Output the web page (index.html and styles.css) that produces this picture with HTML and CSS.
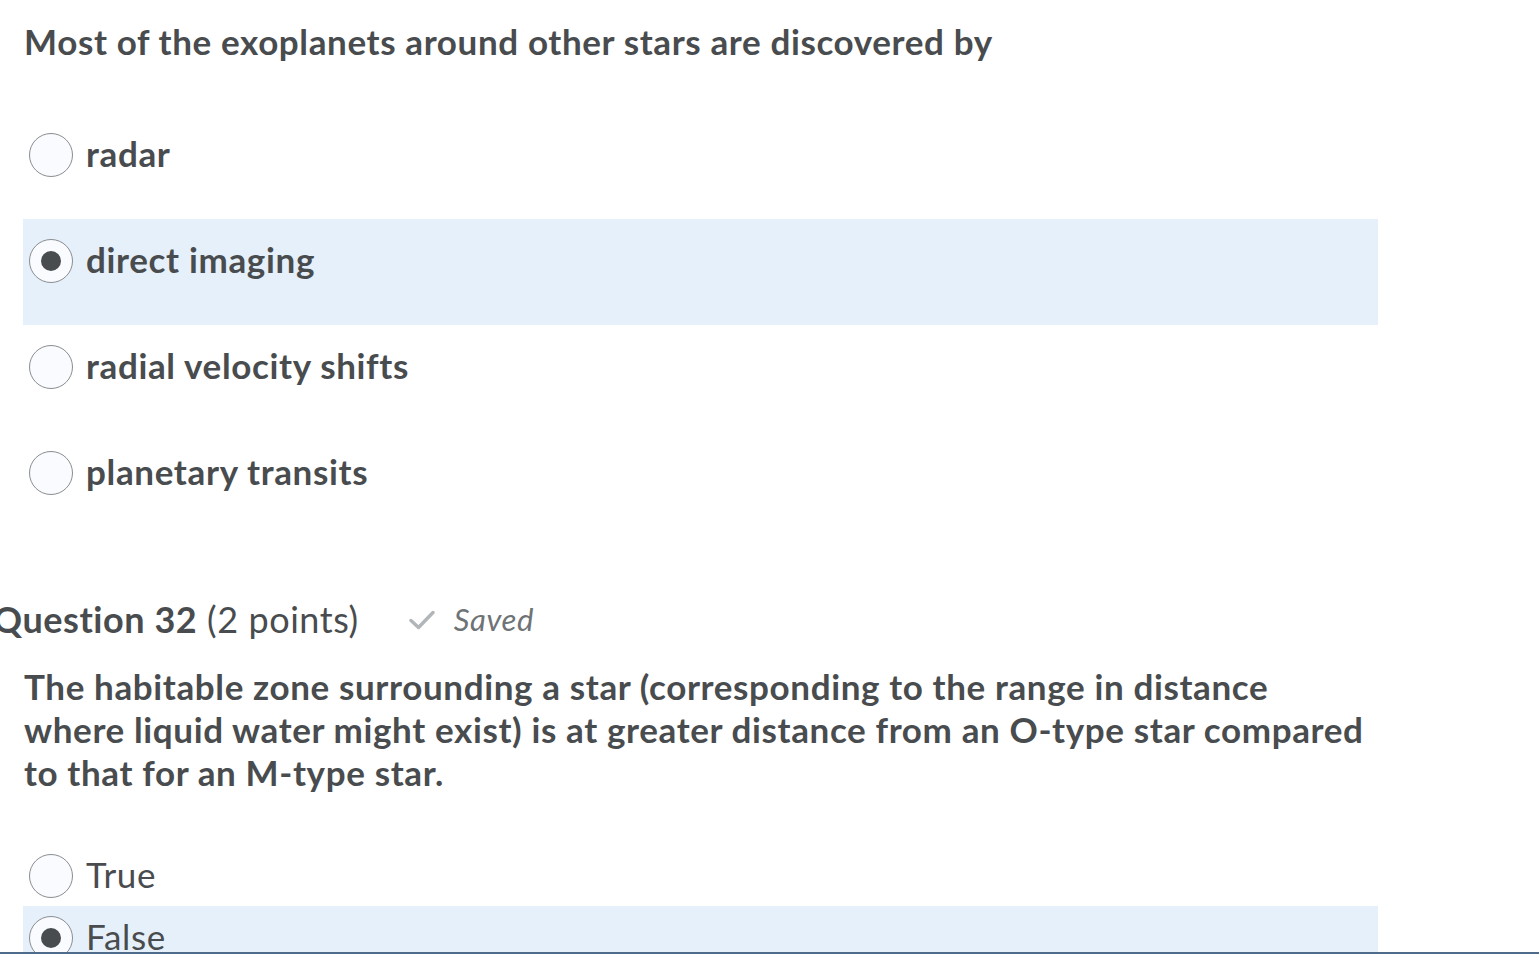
FILE: index.html
```html
<!DOCTYPE html>
<html>
<head>
<meta charset="utf-8">
<link rel="stylesheet" href="styles.css">
</head>
<body>
<div class="page">
  <div class="qtext">Most of the exoplanets around other stars are discovered by</div>
  <div class="options">
    <div class="opt"><span class="radio"></span><span class="label">radar</span></div>
    <div class="opt sel"><span class="radio on"></span><span class="label">direct imaging</span></div>
    <div class="opt"><span class="radio"></span><span class="label">radial velocity shifts</span></div>
    <div class="opt"><span class="radio"></span><span class="label">planetary transits</span></div>
  </div>

  <div class="qhead">
    <span class="qtitle"><span class="qnum">Question 32</span> <span class="pts">(2 points)</span></span>
    <span class="saved">
      <svg class="check" viewBox="0 0 26 20" width="26" height="20"><path d="M2 10.5 L9.5 17.5 L24 2.5" fill="none" stroke="#b2b6b9" stroke-width="3.4" stroke-linecap="round" stroke-linejoin="round"/></svg>
      <span class="savedtxt">Saved</span>
    </span>
  </div>
  <div class="qtext q2">The habitable zone surrounding a star (corresponding to the range in distance<br>where liquid water might exist) is at greater distance from an O-type star compared<br>to that for an M-type star.</div>
  <div class="options tf">
    <div class="opt small"><span class="radio"></span><span class="label reg">True</span></div>
    <div class="opt small sel"><span class="radio on"></span><span class="label reg">False</span></div>
  </div>
</div>
<div class="footer-bar"></div>
</body>
</html>
```
FILE: styles.css
```css
html, body {
  margin: 0;
  padding: 0;
  height: 954px;
  overflow: hidden;
  background: #ffffff;
}
body {
  font-family: Lato, "Noto Sans", sans-serif;
  color: #494c4e;
}
.page {
  padding: 20px 0 0 23px;
  width: 1355px;
}
.qtext {
  font-weight: 700;
  font-size: 35px;
  letter-spacing: 0.62px;
  line-height: 43px;
  padding-left: 1px;
  white-space: nowrap;
}
.options {
  margin-top: 50px;
  display: flex;
  flex-direction: column;
}
.opt {
  display: flex;
  align-items: flex-start;
  height: 106px;
  box-sizing: border-box;
  padding: 20px 0 0 6px;
}
.opt.small {
  height: 62px;
  padding-top: 10px;
}
.opt.sel {
  background: #e6f0fb;
}
.radio {
  flex: none;
  width: 44px;
  height: 44px;
  box-sizing: border-box;
  border: 1.5px solid #8a8d90;
  border-radius: 50%;
  background: #f9fbff;
  display: flex;
  align-items: center;
  justify-content: center;
}
.radio.on::after {
  content: "";
  width: 20px;
  height: 20px;
  border-radius: 50%;
  background: #494c4e;
}
.label {
  margin-left: 13px;
  margin-top: -2px;
  font-size: 35px;
  letter-spacing: 0.65px;
  font-weight: 700;
  line-height: 44px;
}
.label.reg {
  font-weight: 400;
}
.qhead {
  margin-top: 61px;
  margin-left: -30px;
  line-height: 43px;
  display: flex;
  align-items: center;
}
.qtitle {
  font-size: 36px;
  letter-spacing: 0.55px;
  white-space: nowrap;
}
.qnum {
  font-weight: 700;
}
.saved {
  margin-left: 50px;
  display: flex;
  align-items: center;
}
.check {
  display: block;
}
.savedtxt {
  margin-left: 19px;
  font-style: italic;
  font-size: 31px;
  letter-spacing: 0.6px;
  color: #6e7376;
}
.qhead + .qtext {
  margin-top: 24px;
}
.footer-bar {
  position: fixed;
  left: 0;
  right: 0;
  bottom: 0;
  height: 2px;
  background: #4f6b8b;
}
```
